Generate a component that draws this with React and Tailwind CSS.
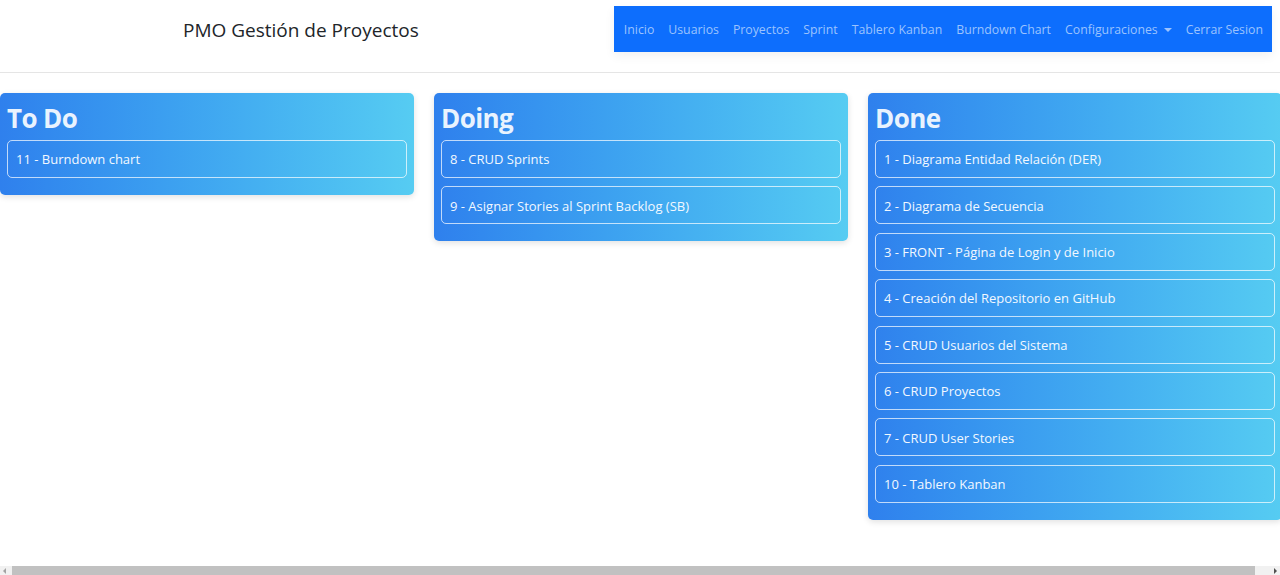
import React from "react";

const navLinks = [
  "Inicio",
  "Usuarios",
  "Proyectos",
  "Sprint",
  "Tablero Kanban",
  "Burndown Chart",
];

const columns = [
  { title: "To Do", items: ["11 - Burndown chart"] },
  {
    title: "Doing",
    items: ["8 - CRUD Sprints", "9 - Asignar Stories al Sprint Backlog (SB)"],
  },
  {
    title: "Done",
    items: [
      "1 - Diagrama Entidad Relación (DER)",
      "2 - Diagrama de Secuencia",
      "3 - FRONT - Página de Login y de Inicio",
      "4 - Creación del Repositorio en GitHub",
      "5 - CRUD Usuarios del Sistema",
      "6 - CRUD Proyectos",
      "7 - CRUD User Stories",
      "10 - Tablero Kanban",
    ],
  },
];

function KanbanColumn({ title, items }) {
  return (
    <div className="w-[413.5px] shrink-0 self-start rounded-[5px] bg-gradient-to-r from-[#2f80ed] to-[#56ccf2] px-[7px] pt-[10px] pb-[17px] shadow-[0_2px_6px_rgba(0,0,0,0.12)]">
      <h2 className="mb-[6px] text-[26px] font-bold leading-[31px] tracking-[-0.6px] text-[#e9f3fe]">
        {title}
      </h2>
      <div className="flex flex-col gap-[8.4px]">
        {items.map((item) => (
          <div
            key={item}
            className="flex h-[38px] items-center rounded-[5px] border border-white/70 px-[8px] pt-[2px] text-[13px] text-[#f2f8ff]"
          >
            {item}
          </div>
        ))}
      </div>
    </div>
  );
}

export default function App() {
  return (
    <div
      className="flex h-screen w-full flex-col overflow-hidden bg-white"
      style={{ fontFamily: '"Open Sans", "Noto Sans", sans-serif' }}
    >
      <header className="flex h-[73px] shrink-0 items-start border-b border-[#e5e5e5] bg-white">
        <div className="ml-[183px] mt-[16px] text-[19px] text-[#212529]">
          PMO Gestión de Proyectos
        </div>
        <nav className="ml-auto mr-[8px] mt-[6px] flex h-[46px] items-center bg-[#0d6efd] pl-[3px] pr-[2px] pt-[2px] shadow-[0_4px_10px_rgba(0,0,0,0.06)]">
          {navLinks.map((link) => (
            <a key={link} className="px-[7px] text-[12.3px] text-[#9cc3fe]">
              {link}
            </a>
          ))}
          <a className="flex items-center px-[7px] text-[12.3px] text-[#9cc3fe]">
            Configuraciones
            <span className="ml-[6px] inline-block h-0 w-0 border-x-[4px] border-t-[4px] border-x-transparent border-t-[#9cc3fe]" />
          </a>
          <a className="px-[7px] text-[12.3px] text-[#9cc3fe]">Cerrar Sesion</a>
        </nav>
      </header>

      <main className="flex flex-1 gap-[20.5px] pt-[20px]">
        {columns.map((col) => (
          <KanbanColumn key={col.title} {...col} />
        ))}
      </main>

      <div className="flex h-[9px] shrink-0 items-center bg-[#f1f1f1]">
        <span className="ml-[3px] h-0 w-0 border-y-[3px] border-r-[3px] border-y-transparent border-r-[#a3a3a3]" />
        <div className="ml-[6px] mr-[19px] h-[9px] flex-1 bg-[#c1c1c1]" />
        <span className="mr-[3px] h-0 w-0 border-y-[3px] border-l-[3px] border-y-transparent border-l-[#505050]" />
      </div>
    </div>
  );
}
